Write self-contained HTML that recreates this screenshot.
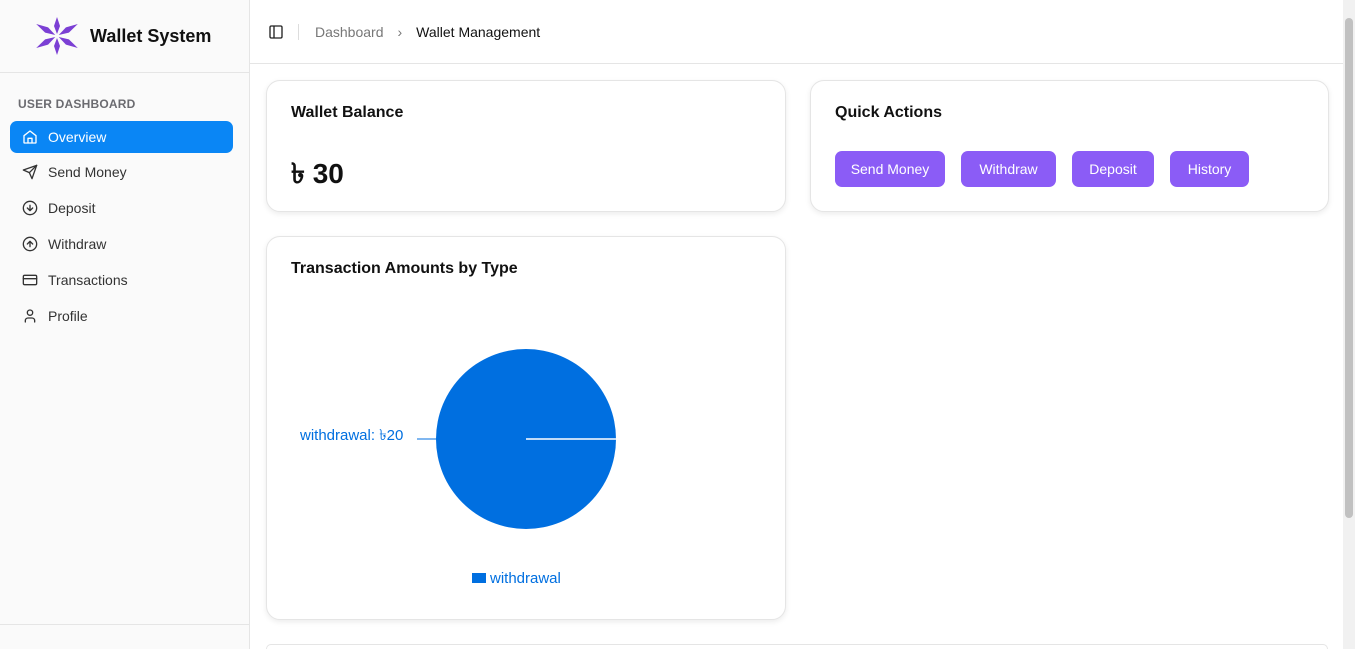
<!DOCTYPE html>
<html style="overflow:hidden;height:649px"><head><meta charset="utf-8"><style>
*{box-sizing:border-box;margin:0;padding:0}
body{width:1355px;height:649px;overflow:hidden;font-family:"Liberation Sans","DejaVu Sans",sans-serif;background:#fff;position:relative;color:#111}
.side{position:absolute;left:0;top:0;width:250px;height:649px;background:#fafafa;border-right:1px solid #e5e5e5}
.logo{height:73px;border-bottom:1px solid #e5e5e5;display:flex;align-items:center;padding-left:32px}
.logo span{font-weight:bold;font-size:18px;margin-left:8px;color:#111}
.lbl{position:absolute;left:18px;top:97px;font-size:12px;font-weight:bold;color:#6b6b70;letter-spacing:.2px}
.nav{position:absolute;left:10px;width:223px;height:32px;display:flex;align-items:center;padding-left:12px;font-size:14px;color:#333;border-radius:7px}
.nav svg{width:16px;height:16px;margin-right:10px;fill:none;stroke:currentColor;stroke-width:2;stroke-linecap:round;stroke-linejoin:round}
.nav.act{background:#0a86f5;color:#fff}
.top{position:absolute;left:250px;top:0;right:12px;height:64px;border-bottom:1px solid #e5e5e5;display:flex;align-items:center;font-size:14px}
.card{position:absolute;background:#fff;border:1px solid #e5e5e5;border-radius:14px;box-shadow:0 2px 6px rgba(0,0,0,.08)}
.card h3{position:absolute;left:24px;top:23px;font-size:16px;font-weight:bold}
.btn{position:absolute;top:70px;height:36px;background:#8b5cf6;color:#fff;border-radius:7px;font-size:14px;display:flex;align-items:center;justify-content:center}
.sb{position:absolute;right:0;top:0;width:12px;height:649px;background:#f1f1f1}
</style></head><body>
<div class="side">
<div class="logo">
<svg width="50" height="40" viewBox="-25 -20 50 40"><g fill="#7b3fd4">
<polygon points="0,-2 -3,-10 0,-19 3,-10" transform="rotate(0)"/>
<polygon points="0,-2 -3,-10 0,-19 3,-10" transform="rotate(180)"/>
<polygon points="0,-2 -3,-12 0,-24 3,-12" transform="rotate(60)"/>
<polygon points="0,-2 -3,-12 0,-24 3,-12" transform="rotate(120)"/>
<polygon points="0,-2 -3,-12 0,-24 3,-12" transform="rotate(240)"/>
<polygon points="0,-2 -3,-12 0,-24 3,-12" transform="rotate(300)"/>
</g></svg><span>Wallet System</span></div>
<div class="lbl">USER DASHBOARD</div>
<div class="nav act" style="top:121px"><svg viewBox="0 0 24 24"><path d="M3 10l9-7 9 7v10a1 1 0 0 1-1 1H4a1 1 0 0 1-1-1z"/><path d="M9 21v-7h6v7"/></svg>Overview</div>
<div class="nav" style="top:156px"><svg viewBox="0 0 24 24"><path d="M22 2L11 13"/><path d="M22 2l-7 20-4-9-9-4z"/></svg>Send Money</div>
<div class="nav" style="top:192px"><svg viewBox="0 0 24 24"><circle cx="12" cy="12" r="10"/><path d="M12 8v8M8 12l4 4 4-4"/></svg>Deposit</div>
<div class="nav" style="top:228px"><svg viewBox="0 0 24 24"><circle cx="12" cy="12" r="10"/><path d="M12 16V8M8 12l4-4 4 4"/></svg>Withdraw</div>
<div class="nav" style="top:264px"><svg viewBox="0 0 24 24"><rect x="2" y="5" width="20" height="14" rx="2"/><path d="M2 10h20"/></svg>Transactions</div>
<div class="nav" style="top:300px"><svg viewBox="0 0 24 24"><circle cx="12" cy="7" r="4"/><path d="M19 21v-2a4 4 0 0 0-4-4H9a4 4 0 0 0-4 4v2"/></svg>Profile</div>
<div style="position:absolute;left:0;right:0;top:624px;border-top:1px solid #e5e5e5"></div>
</div>
<div class="top">
<svg style="margin-left:18px" width="16" height="16" viewBox="0 0 24 24" fill="none" stroke="#222" stroke-width="2"><rect x="3" y="3" width="18" height="18" rx="2"/><path d="M9 3v18"/></svg>
<div style="width:1px;height:16px;background:#ddd;margin:0 16px 0 14px"></div>
<span style="color:#777">Dashboard</span><span style="color:#777;margin:0 14px">›</span><span>Wallet Management</span>
</div>
<div class="card" style="left:266px;top:80px;width:520px;height:132px"><h3>Wallet Balance</h3>
<div style="position:absolute;left:24px;top:71px;font-size:28px;font-weight:bold">৳ 30</div></div>
<div class="card" style="left:810px;top:80px;width:519px;height:132px"><h3>Quick Actions</h3>
<div class="btn" style="left:24px;width:110px">Send Money</div>
<div class="btn" style="left:150px;width:95px">Withdraw</div>
<div class="btn" style="left:261px;width:82px">Deposit</div>
<div class="btn" style="left:359px;width:79px">History</div>
</div>
<div class="card" style="left:266px;top:236px;width:520px;height:384px"><h3>Transaction Amounts by Type</h3>
<svg style="position:absolute;left:0;top:0" width="520" height="384">
<circle cx="259" cy="202" r="90" fill="#006fe0"/>
<line x1="259" y1="202" x2="349" y2="202" stroke="#fff" stroke-width="1.5"/>
<line x1="150" y1="202" x2="170" y2="202" stroke="#006fe0"/>
<text x="33" y="203" font-size="15" fill="#006fe0" font-family="Liberation Sans, DejaVu Sans, sans-serif">withdrawal: ৳20</text>
<rect x="205" y="336" width="14" height="10" fill="#006fe0"/>
<text x="223" y="346" font-size="15" fill="#006fe0" font-family="Liberation Sans, DejaVu Sans, sans-serif">withdrawal</text>
</svg></div>
<div class="card" style="left:266px;top:644px;width:1062px;height:5px;border-bottom:none;border-radius:14px 14px 0 0;box-shadow:none"></div>
<div class="sb"><div style="position:absolute;left:2px;top:18px;width:8px;height:500px;background:#c1c1c1;border-radius:4px"></div></div>
</body></html>
